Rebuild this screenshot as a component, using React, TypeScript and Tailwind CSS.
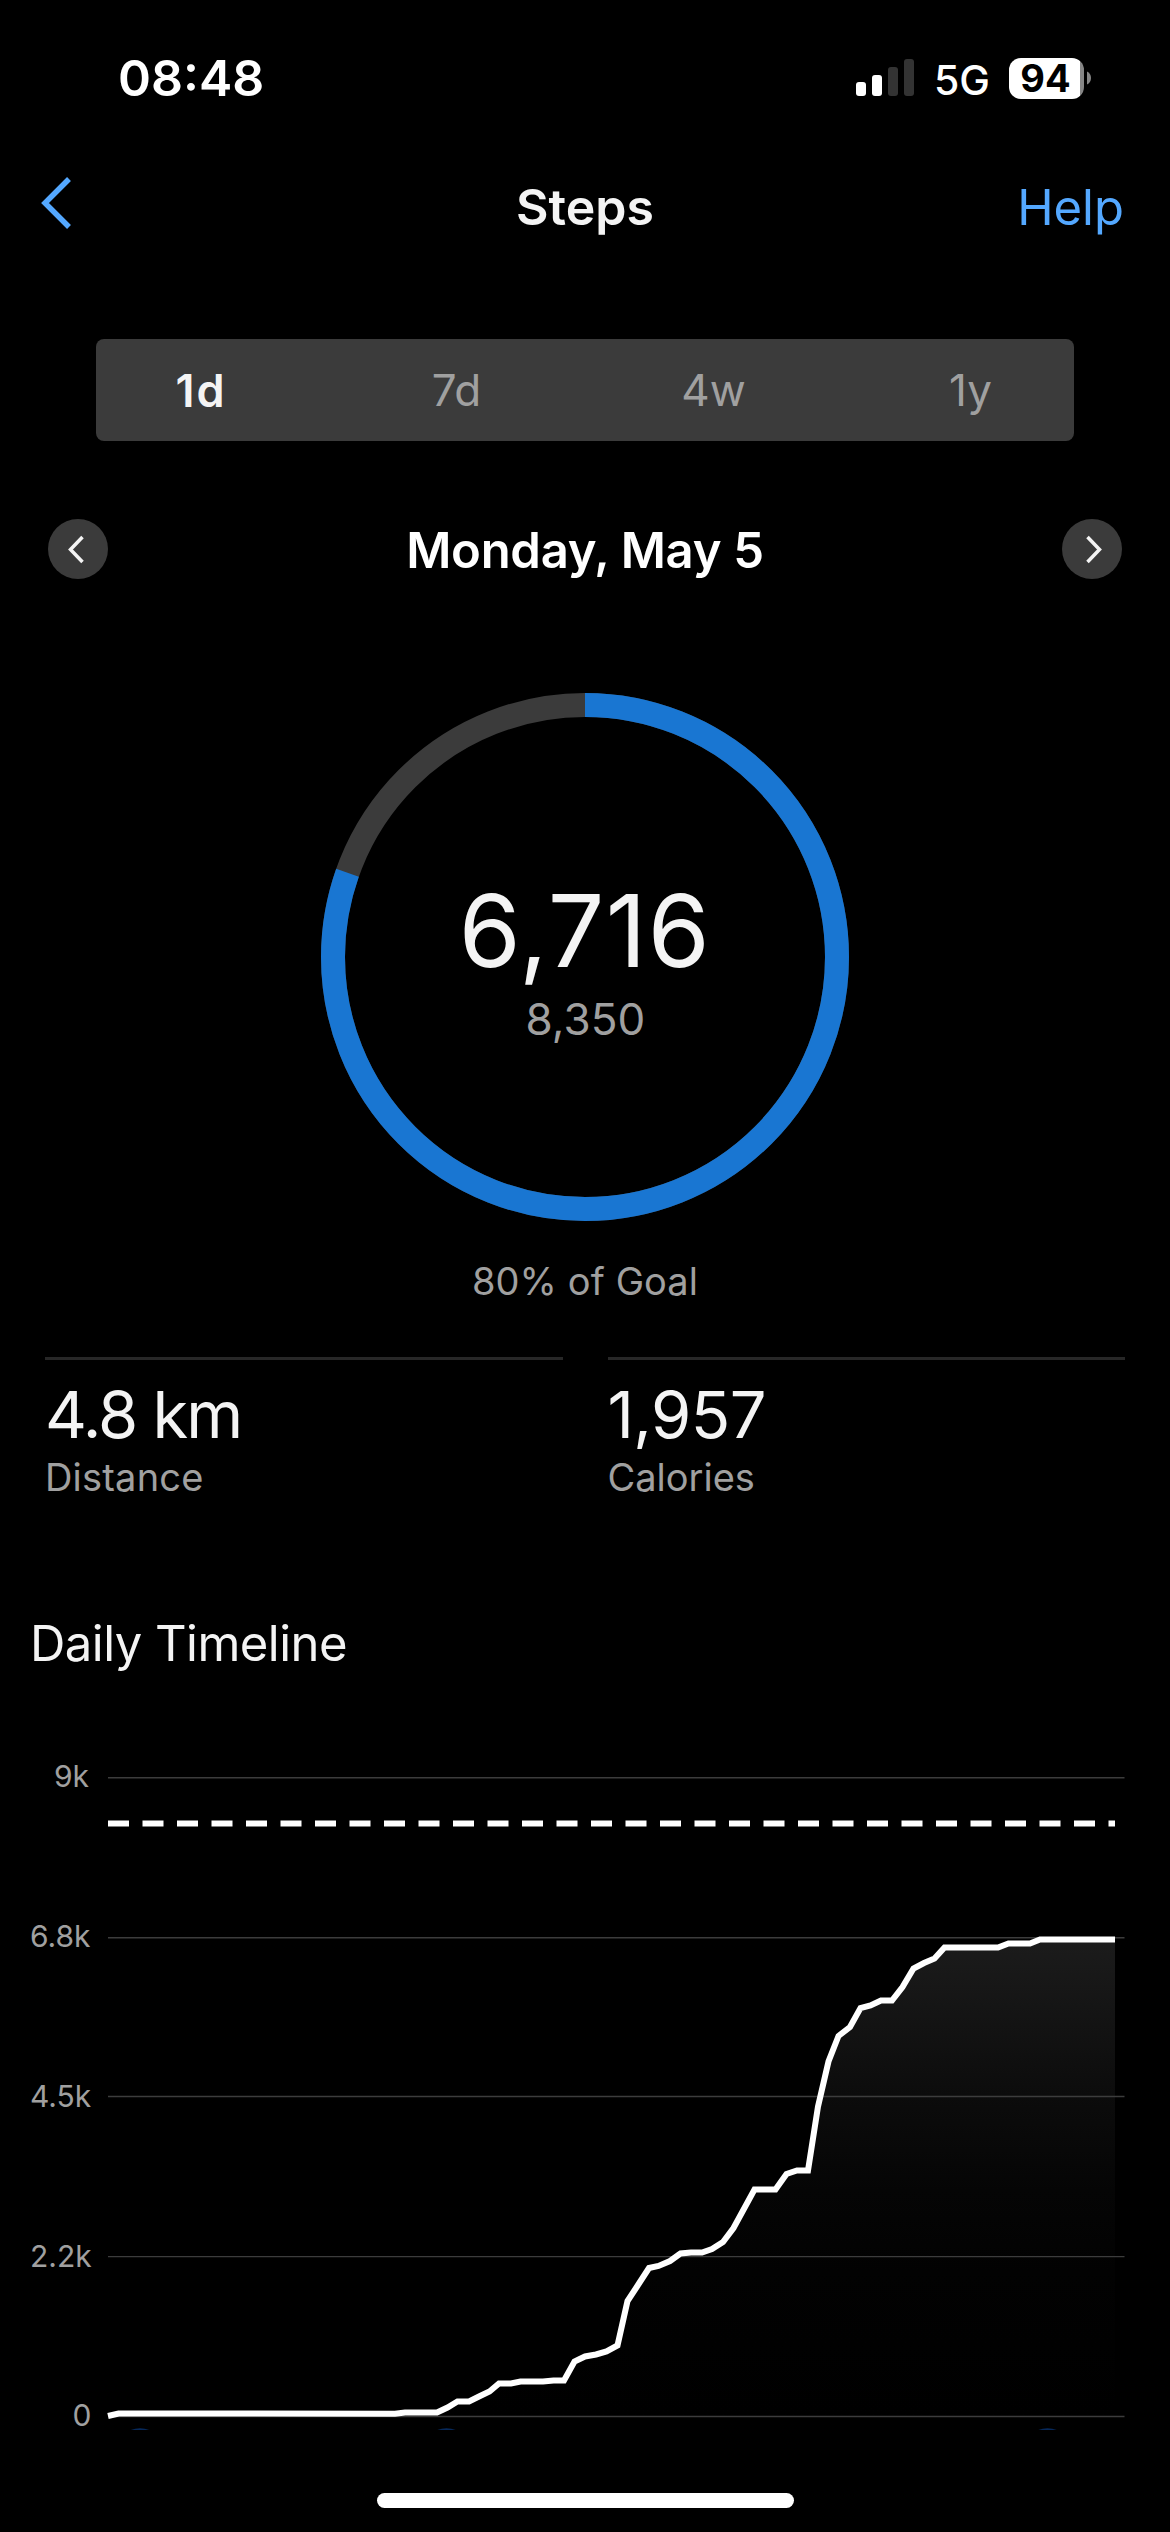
const tabs = ["7d", "4w", "1y"]

const gridLines = [
    { label: "9k", x: 54, y: 37.7, baseline: 47 },
    { label: "6.8k", x: 30, y: 197.7, baseline: 207 },
    { label: "4.5k", x: 30, y: 356.5, baseline: 367 },
    { label: "2.2k", x: 30, y: 516.6, baseline: 527 },
    { label: "0", x: 72.5, y: 676.5, baseline: 686 },
]

// cumulative steps, in chart pixels
const line =
    "108,676 118.5,673.5 395,673.7 405,672.5 437,672.5 447.5,667.5 457.5,661.5 469,661.5 479.5,656.3 489.5,651.5 499,643.5 511,643.5 520.5,641.5 543,641.5 553.5,640.5 564,640.5 574.5,621.5 585,616.5 596,614.5 606.5,611.5 617.5,605.5 627.5,561 638,545 649,528 658.5,526 670,521 680.5,513.5 691,512.5 702,512.5 712,509 723,502 733.5,488 754.5,449.5 775.5,449.5 786.5,434 797,430.5 808,430.5 818,366.5 828.5,321.5 838.5,296 850,287 860.5,268 870.5,265.5 881,260.5 892,260.5 902.5,247 913.5,228.5 924,223 934.5,218.5 944.5,207.5 998,207.5 1008.5,203.5 1030,203.5 1040,199.5 1115,199.5"

function StatusBar() {
    return (
        <div className="flex h-[156px] items-center justify-between pl-[118px] pr-[79px]">
            <div className="text-[50px] leading-none font-semibold text-white">08:48</div>
            <div className="flex items-center">
                <svg width="58" height="38" viewBox="0 0 58 38">
                    <rect x="0" y="23" width="10" height="14" rx="3" fill="#fff" />
                    <rect x="16" y="16" width="10" height="21" rx="3" fill="#fff" />
                    <rect x="32" y="8" width="10" height="29" rx="3" fill="#333" />
                    <rect x="48" y="0" width="10" height="37" rx="3" fill="#333" />
                </svg>
                <div className="ml-[20px] mt-[3px] text-[41px] leading-[50px] font-medium text-white">5G</div>
                <div className="ml-[19px] flex h-[41px] w-[75px] justify-center rounded-[12px] bg-[linear-gradient(to_right,#fff_71px,#868686_71px)] pr-[2px] text-[38px] leading-[41px] font-bold text-black">
                    94
                </div>
                <svg className="ml-[3px]" width="4" height="14" viewBox="0 0 4 14">
                    <path d="M0 0.5C2.4 1.5 4 4 4 7s-1.6 5.5-4 6.5z" fill="#868686" />
                </svg>
            </div>
        </div>
    )
}

function Timeline() {
    return (
        <svg className="mt-[66px] block" width="1170" height="710" viewBox="0 0 1170 710">
            <defs>
                <linearGradient id="area" gradientUnits="userSpaceOnUse" x1="0" y1="197" x2="0" y2="676">
                    <stop offset="0" stopColor="#1c1c1c" />
                    <stop offset="0.33" stopColor="#0c0c0c" />
                    <stop offset="0.53" stopColor="#050505" />
                    <stop offset="0.7" stopColor="#020202" />
                    <stop offset="1" stopColor="#000000" />
                </linearGradient>
                <clipPath id="plot">
                    <rect width="1170" height="690" />
                </clipPath>
            </defs>
            <polygon points={`${line} 1115,676 108,676`} fill="url(#area)" />
            {gridLines.map((g) => (
                <g key={g.label}>
                    <line x1="108" x2="1124.5" y1={g.y} y2={g.y} stroke="#3c3c3c" strokeWidth="1.4" />
                    <text x={g.x} y={g.baseline} fontSize="30" fill="#a0a0a0">{g.label}</text>
                </g>
            ))}
            {/* goal */}
            <line x1="108" x2="1115" y1="83.5" y2="83.5" stroke="#fff" strokeWidth="6" strokeDasharray="21 13.5" />
            <polyline points={line} fill="none" stroke="#fff" strokeWidth="6" />
            <g fill="#06285a" clipPath="url(#plot)">
                <circle cx="140" cy="714.3" r="26" />
                <circle cx="446.5" cy="714.3" r="26" />
                <circle cx="1047.5" cy="714.3" r="26" />
            </g>
        </svg>
    )
}

export default function App() {
    return (
        <div className="h-[2532px] w-[1170px] overflow-hidden bg-black font-['Inter',sans-serif] text-[#f4f4f4]">
            <StatusBar />
            {/* Header */}
            <div className="grid h-[102px] grid-cols-3 items-center px-[46px]">
                <svg className="mb-2 -ml-[5px]" width="30" height="52" viewBox="0 0 30 52">
                    <path d="M28 2L4 26l24 24" fill="none" stroke="#54a8ff" strokeWidth="5.5" />
                </svg>
                <div className="text-center text-[50px] leading-none font-semibold">Steps</div>
                <div className="text-right text-[49px] leading-none text-[#54a8ff]">Help</div>
            </div>
            {/* Range tabs */}
            <div className="mx-[96px] mt-[81px] flex h-[102px] items-center justify-center rounded-[8px] bg-[#3b3b3b] text-[44px] leading-none text-[#a0a0a0]">
                <div className="w-[257px] shrink-0 pl-[3px] text-center text-[45px] font-semibold tracking-[2px] text-[#f4f4f4]">1d</div>
                {tabs.map((t) => (
                    <div key={t} className="w-[257px] shrink-0 text-center">{t}</div>
                ))}
            </div>
            {/* Date */}
            <div className="mt-[78px] flex h-[60px] items-center justify-between px-[48px]">
                <div className="size-[60px] rounded-full bg-[#3b3b3b]">
                    <svg width="60" height="60" viewBox="0 0 60 60">
                        <path d="M34.5 18L22.5 30.5l12 12.5" fill="none" stroke="#f4f4f4" strokeWidth="3.5" />
                    </svg>
                </div>
                <div className="pt-[2px] text-[49px] leading-none font-semibold tracking-[-0.28px] text-white">Monday, May 5</div>
                <div className="size-[60px] rounded-full bg-[#3b3b3b]">
                    <svg width="60" height="60" viewBox="0 0 60 60">
                        <path d="M25.5 18l12 12.5L25.5 43" fill="none" stroke="#f4f4f4" strokeWidth="3.5" />
                    </svg>
                </div>
            </div>
            {/* Goal ring */}
            <div className="mt-[114px] grid justify-center">
                <svg className="col-start-1 row-start-1" width="528" height="528" viewBox="0 0 528 528">
                    <circle cx="264" cy="264" r="252" fill="none" stroke="#3b3b3b" strokeWidth="24" />
                    <circle
                        cx="264"
                        cy="264"
                        r="252"
                        fill="none"
                        stroke="#1976d2"
                        strokeWidth="24"
                        pathLength="8350"
                        strokeDasharray="6716 8350"
                        transform="rotate(-90 264 264)"
                    />
                </svg>
                <div className="col-start-1 row-start-1 pt-[188px] text-center">
                    <div className="text-[100px] leading-[100px] tracking-[1.4px]">6,716</div>
                    <div className="mt-[16px] pl-[1px] text-[44px] leading-[44px] tracking-[0.1px] text-[#a0a0a0]">8,350</div>
                </div>
            </div>
            <div className="mt-[40px] text-center text-[38px] leading-[40px] tracking-[0.1px] text-[#a0a0a0]">80% of Goal</div>
            {/* Stats */}
            <div className="mt-[56px] grid grid-cols-2 gap-[45px] px-[45px]">
                <div className="border-t-[3px] border-[#272727] pt-[23px]">
                    <div className="text-[65px] leading-[64px] tracking-[-2px]">4.8 km</div>
                    <div className="mt-[10px] text-[38px] leading-[40px] tracking-[0.2px] text-[#a0a0a0]">Distance</div>
                </div>
                <div className="border-t-[3px] border-[#272727] pt-[23px]">
                    <div className="text-[65px] leading-[64px] tracking-[-0.6px]">1,957</div>
                    <div className="mt-[10px] text-[38px] leading-[40px] text-[#a0a0a0]">Calories</div>
                </div>
            </div>
            <div className="mt-[117px] pl-[30px] text-[49px] leading-[60px] tracking-[-0.53px]">Daily Timeline</div>
            <Timeline />
            {/* Home indicator */}
            <div className="mx-auto mt-[43px] h-[15px] w-[417px] rounded-full bg-white"></div>
        </div>
    )
}
